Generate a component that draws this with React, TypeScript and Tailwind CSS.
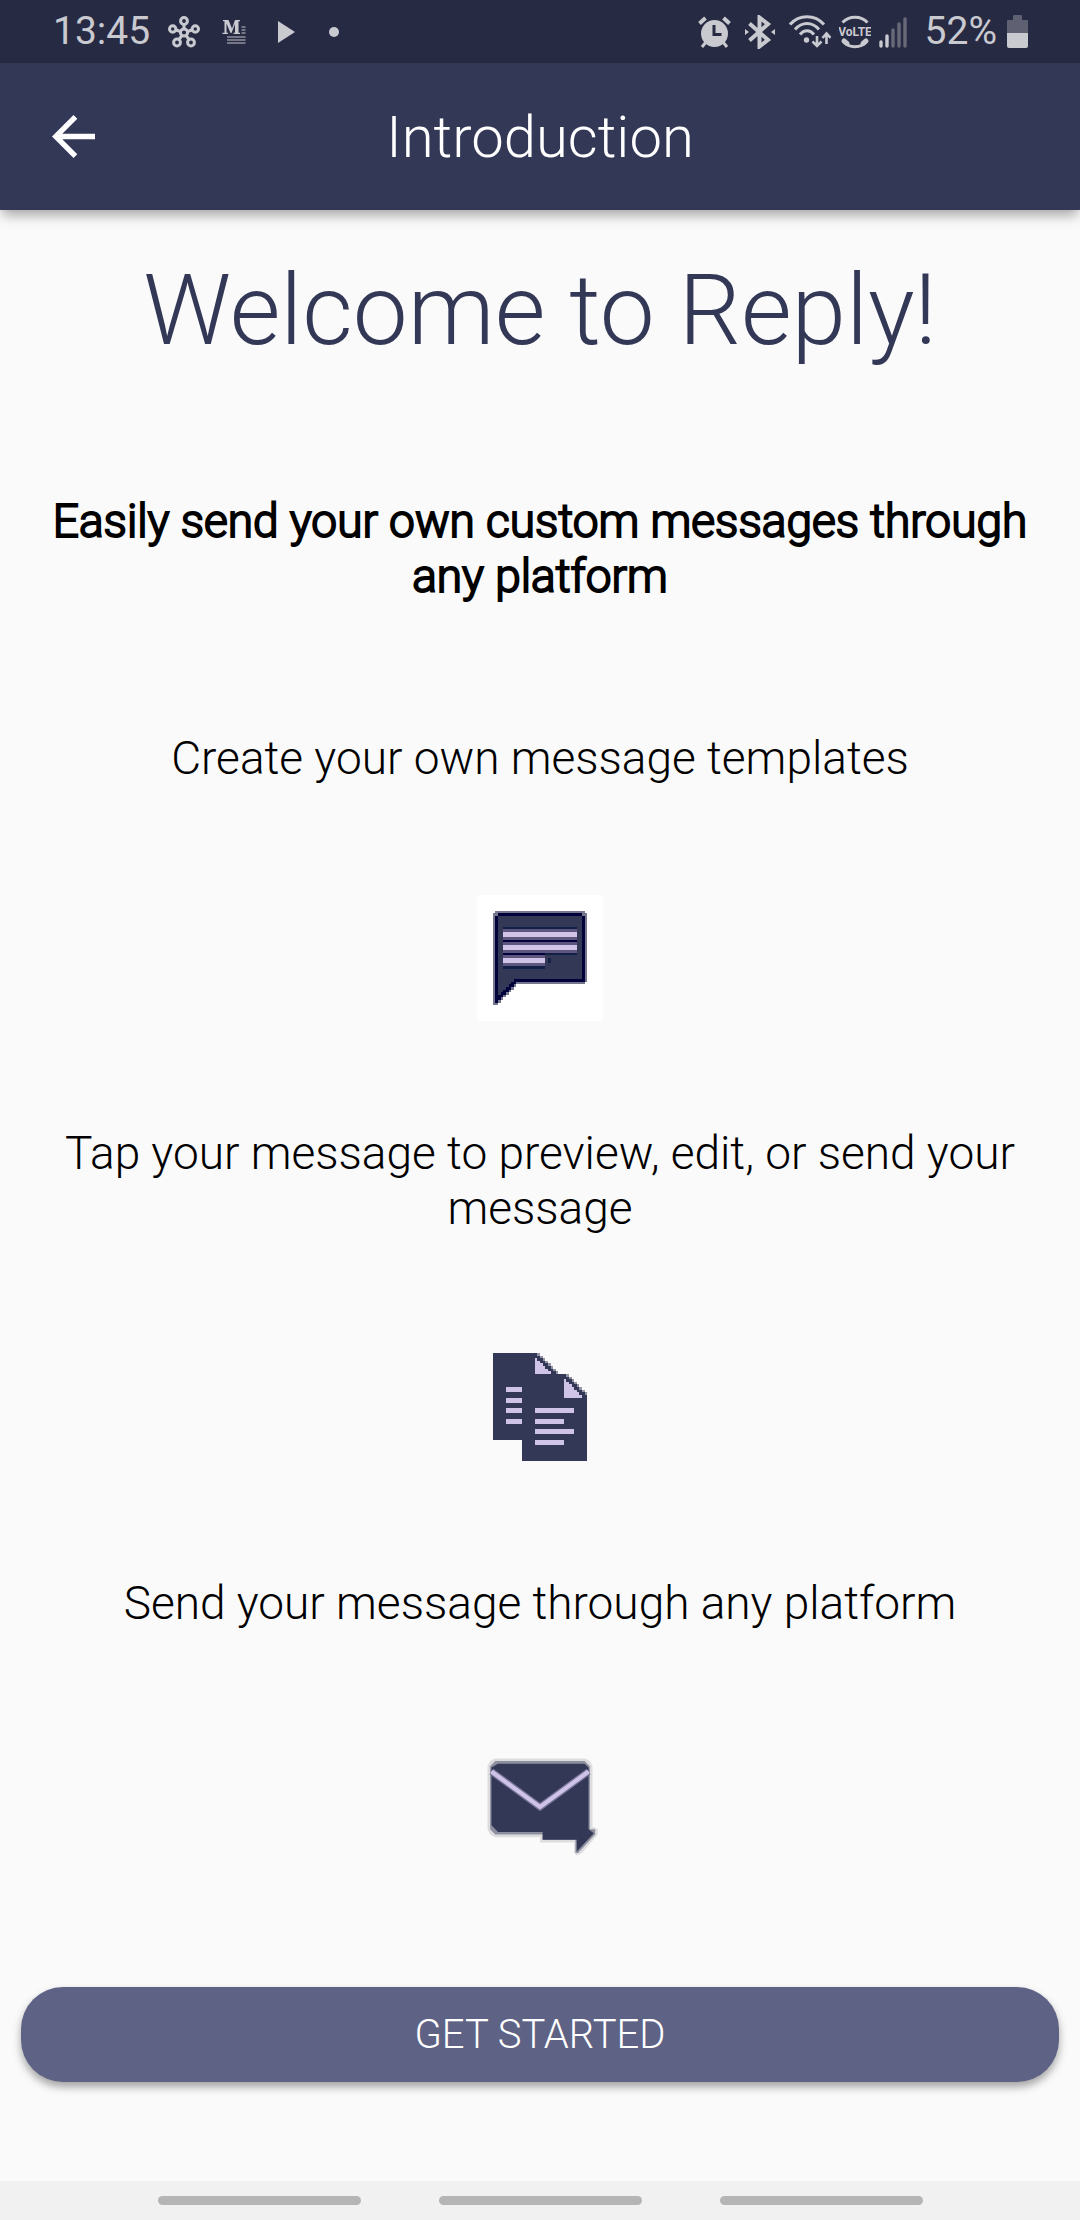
import React from "react";

const NAVY = "#333857";
const LILAC = "#cfc3e8";
const GLYPH = "#c9c9d0";

function NetworkIcon() {
  return (
    <svg width="32" height="32" viewBox="0 0 32 32" fill="none" stroke={GLYPH} strokeWidth="3" aria-hidden="true">
      <circle cx="16" cy="16.500" r="3.600" />
      <circle cx="16" cy="5" r="3.400" />
      <circle cx="4.700" cy="13" r="3.200" />
      <circle cx="27.300" cy="13" r="3.200" />
      <circle cx="9" cy="26.500" r="3.400" />
      <circle cx="23" cy="26.500" r="3.400" />
      <path d="M16 8.500v4M8 14l4.500 1.500M24 14l-4.500 1.500M11 23.500l3-4M21 23.500l-3-4" />
    </svg>
  );
}

function NewsIcon() {
  return (
    <svg width="24" height="26" viewBox="0 0 24 26" aria-hidden="true">
      <path fill={GLYPH} d="M1 1h5.500l3.500 8.500L13 1h5v1.300h-1.500v11.400H18V15h-6.500v-1.300H13V5L9.500 14h-1L4.500 4.500v9.200H6V15H.5v-1.300H2.500V2.300H1z" />
      <path stroke="#8f909d" strokeWidth="1.300" d="M19.500 8h4M19.500 11h4M19.500 14h4M5 18h18.500M5 21h18.500M5 24h18.500" />
    </svg>
  );
}

function AlarmIcon() {
  return (
    <svg width="33" height="32" viewBox="0 0 33 32" aria-hidden="true">
      <circle cx="16.500" cy="17.500" r="13.500" fill={GLYPH} />
      <path stroke={GLYPH} strokeWidth="4" d="M1.500 7.500l6-5.500M31.500 7.500l-6-5.500" />
      <path stroke={GLYPH} strokeWidth="3" d="M4 31l4-5M29 31l-4-5" />
      <path fill="none" stroke="#272a43" strokeWidth="3" d="M16 9v9.500h7.500" />
    </svg>
  );
}

function BluetoothIcon() {
  return (
    <svg width="30" height="34" viewBox="0 0 30 34" aria-hidden="true">
      <path fill="none" stroke={GLYPH} strokeWidth="4" d="M4.500 8.500L23 25l-8.500 6.500v-29L23 9 4.500 25.500" />
      <path fill={GLYPH} d="M0 14l4 3-4 3zM30 14l-4 3 4 3z" />
    </svg>
  );
}

function WifiIcon() {
  return (
    <svg width="42" height="34" viewBox="0 0 42 34" aria-hidden="true">
      <g fill="none" stroke={GLYPH} strokeWidth="3">
        <path d="M1 9.500C10-1 26-1 35 9.500M6 14.500c7-8 17-8 24 0M11 19.500c4-5 10-5 14 0" />
        <path d="M28 21v9M23.500 26.500l4.500 4.500 4.500-4.500M37.500 29V19M33.500 23l4-4.500 4 4.500" strokeWidth="2.600" />
      </g>
      <circle cx="17.500" cy="25" r="2.700" fill={GLYPH} />
    </svg>
  );
}

function VolteIcon() {
  return (
    <svg width="32" height="34" viewBox="0 0 32 34" aria-hidden="true">
      <path fill="none" stroke={GLYPH} strokeWidth="3" d="M3.500 7.500C10 .5 22 .5 28.500 7.500M5 26.500C10 33.500 22 33.500 27 26.500" />
      <path stroke={GLYPH} strokeWidth="5" strokeLinecap="round" d="M5 26l3 2.500M27 26l-3 2.500" />
      <text x="16" y="20.500" textAnchor="middle" fill={GLYPH} fontFamily="Roboto, sans-serif" fontWeight="700" fontSize="12">VoLTE</text>
    </svg>
  );
}

function SignalIcon() {
  return (
    <svg width="28" height="32" viewBox="0 0 28 32" aria-hidden="true">
      <g strokeWidth="3.400" strokeLinecap="round">
        <path stroke={GLYPH} d="M2 30v-4M8 30V20" />
        <path stroke="#676978" d="M14 30V14M20 30V8M26 30V3" />
      </g>
    </svg>
  );
}

function BatteryIcon() {
  return (
    <svg width="21" height="33" viewBox="0 0 21 33" aria-hidden="true">
      <path fill="#5f6172" d="M6 1q0-1 1-1h7q1 0 1 1v4h5q1 0 1 1v12H0V6q0-1 1-1h5z" />
      <path fill={GLYPH} d="M0 18h21v13q0 2-2 2H2q-2 0-2-2z" />
    </svg>
  );
}

function MessageIcon() {
  return (
    <svg className="size-[126px] bg-white" viewBox="0 0 48 48" shapeRendering="crispEdges" role="img" aria-label="Message template">
      <path fill="#77768f" d="M7 6h34v1h1v26h-1v1H15v1h-1v1h-1v1h-1v1h-1v1h-1v1H9v1H8v1H6V7h1z" />
      <path fill="#00003b" d="M8 7h32v1h1v25H15v1h-1v1h-1v1h-1v1h-1v1h-1v1H9v1H8v1H7V8h1z" />
      <path fill={NAVY} d="M8 8h32v24H14v1h-1v1h-1v1h-1v1h-1v1H9v1H8z" />
      <path fill="#132045" d="M10 12h28v1H10zM26 22h12v1H26zM10 27h16v1H10zM27 24h1v2h-1z" />
      <path fill="#00003b" d="M10 17h28v1H10zM10 22h16v1H10z" />
      <path fill="#5f5680" d="M10 13h28v4H10zM10 18h28v4H10zM10 23h16v4H10z" />
      <path fill={LILAC} d="M10 14h28v2H10zM10 19h28v2H10zM10 24h16v2H10z" />
    </svg>
  );
}

function CopyIcon() {
  return (
    <svg className="size-[126px]" viewBox="0 0 48 48" shapeRendering="crispEdges" role="img" aria-label="Message pages">
      <g transform="translate(0 3)">
        <path fill="#9294a5" d="M22 0h2v1h1v1h1v1h1v1h1v1h1v1h1v1h1v1h-9zM33 8h2v1h1v1h1v1h1v1h1v1h1v1h1v1h1v1h-9z" />
        <path fill={NAVY} d="M6 0h17v1h1v1h1v1h1v1h1v1h1v1h1v1h1v1h4v1h1v1h1v1h1v1h1v1h1v1h1v1h1v1h1v25H17v-8H6z" />
        <path fill={LILAC} d="M22 2h1v1h1v1h1v1h1v1h1v1h1v1h-6zM33 10h1v1h1v1h1v1h1v1h1v1h1v1h1v1h-7z" />
        <path fill={LILAC} d="M11 13h6v2h-6zM11 17h6v2h-6zM11 21h6v2h-6zM11 25h6v2h-6zM22 21h15v2H22zM22 25h11v2H22zM22 29h15v2H22zM22 33h11v2H22z" />
      </g>
    </svg>
  );
}

function SendIcon() {
  return (
    <svg className="size-[126px]" viewBox="0 0 48 48" role="img" aria-label="Send message">
      <g transform="translate(0 2)">
        <path fill="#dddddf" d="M7 5h34l2 1 1 2v23l2 1v2l-6 7-2 1-1-1v-4H24v-2H7l-2-1-1-2V8l1-2z" />
        <path fill="#8d8f9e" d="M7 6h34l2 2v24h2v2l-6.500 7h-1v-5H25v-2H7l-2-2V8z" />
        <path fill={NAVY} d="M8 7h33l1.500 1.500V32l2 1.500-6.500 7V36H25v-3H8l-2.500-2.500v-22z" />
        <path fill="none" stroke="#77749a" strokeWidth="2.600" d="M5.500 10L24 23.500 42.500 10" />
        <path fill="none" stroke={LILAC} strokeWidth="1.600" d="M5.500 10L24 23.500 42.500 10" />
      </g>
    </svg>
  );
}

function Step({ text, children }: { text: string; children: React.ReactNode }) {
  return (
    <section className="flex flex-col items-center gap-[109px]">
      <p className="text-[46px] leading-[55px] text-black">{text}</p>
      {children}
    </section>
  );
}

export default function App() {
  return (
    <div className="flex min-h-screen flex-col bg-[#fafafa] text-center font-['Roboto',sans-serif] font-light">
      <div className="flex h-[63px] items-center justify-between bg-[#272a43] pr-[52px] pl-[53px] text-[39px] font-normal text-[#c9c9d0]">
        <div className="flex items-center">
          <span>13:45</span>
          <span className="ml-[18px]"><NetworkIcon /></span>
          <span className="ml-[22px]"><NewsIcon /></span>
          <svg className="ml-8" width="17" height="22" viewBox="0 0 17 22" aria-hidden="true"><path fill={GLYPH} d="M0 0l17 11L0 22z" /></svg>
          <span className="ml-[34px] size-[10px] rounded-full bg-[#c9c9d0]" />
        </div>
        <div className="flex items-center">
          <AlarmIcon />
          <span className="ml-[14px]"><BluetoothIcon /></span>
          <span className="ml-[14px]"><WifiIcon /></span>
          <span className="ml-2"><VolteIcon /></span>
          <span className="ml-2"><SignalIcon /></span>
          <span className="ml-[18px]">52%</span>
          <span className="ml-[10px]"><BatteryIcon /></span>
        </div>
      </div>

      <header className="grid h-[147px] grid-cols-[1fr_auto_1fr] items-center bg-[#333857] px-[52px] text-white shadow-[0_7px_12px_-2px_rgba(0,0,0,0.35)]">
        <button type="button" aria-label="Back" className="justify-self-start">
          <svg width="43" height="43" viewBox="4 4 16 16" fill="white"><path d="M20 11H7.830l5.590-5.590L12 4l-8 8 8 8 1.410-1.410L7.830 13H20v-2z" /></svg>
        </button>
        <h1 className="text-[58px] leading-[68px]">Introduction</h1>
      </header>

      <main className="flex grow flex-col px-[21px] pt-[43px]">
        <h2 className="text-[98px] leading-[115px] text-[#333857]">Welcome to Reply!</h2>
        <p className="mt-[126px] text-[46px] leading-[55px] text-black [-webkit-text-stroke:2px_black]">
          Easily send your own custom messages through any platform
        </p>
        <div className="mt-[127px] flex flex-col gap-[105px]">
          <Step text="Create your own message templates"><MessageIcon /></Step>
          <Step text="Tap your message to preview, edit, or send your message"><CopyIcon /></Step>
          <Step text="Send your message through any platform"><SendIcon /></Step>
        </div>
        <button type="button" className="mt-[121px] h-[95px] rounded-[42px] bg-[#5e6284] text-[40px] text-white shadow-[0_5px_8px_rgba(0,0,0,0.35)]">
          GET STARTED
        </button>
      </main>

      <nav aria-label="System navigation" className="flex h-[39px] items-center justify-center gap-[78px] bg-[#f1f1f1]">
        <button type="button" aria-label="Recent apps" className="h-[9px] w-[203px] rounded-full bg-[#b5b5b5]" />
        <button type="button" aria-label="Home" className="h-[9px] w-[203px] rounded-full bg-[#b5b5b5]" />
        <button type="button" aria-label="Go back" className="h-[9px] w-[203px] rounded-full bg-[#b5b5b5]" />
      </nav>
    </div>
  );
}
